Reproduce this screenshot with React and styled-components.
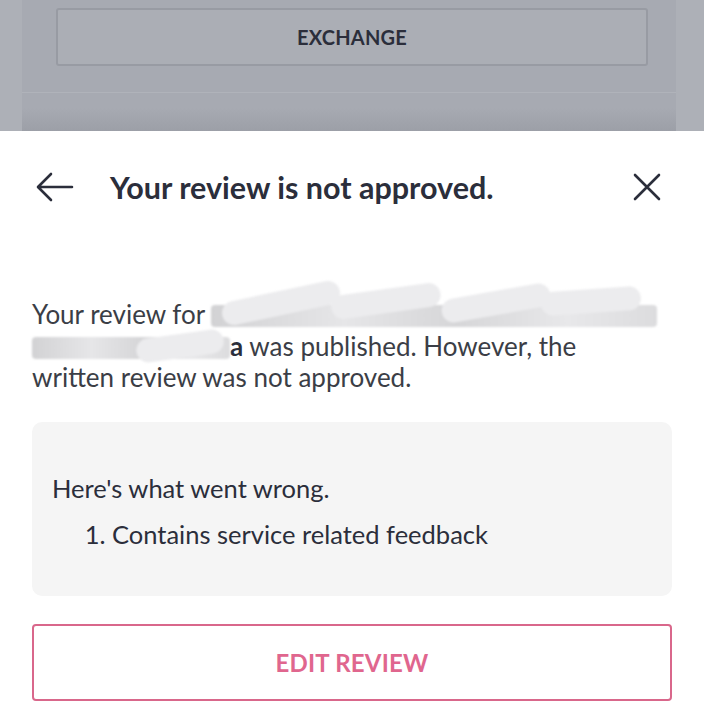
import React from 'react'
import styled, { createGlobalStyle } from 'styled-components'

const Global = createGlobalStyle`
html, body {
    margin: 0;
    padding: 0;
    background: #fff;
}
body {
    font-family: "Lato", "Noto Sans", sans-serif;
    width: 704px;
    height: 724px;
    overflow: hidden;
}
`

const Backdrop = styled.div`
height: 131px;
background: #adb0b7;
display: flex;
padding-left: 22px;
`

const BackPanel = styled.div`
width: 654px;
background: #a7aab2;
display: flex;
flex-direction: column;
`

const BackButtonRow = styled.div`
height: 93px;
border-bottom: 1px solid #b0b3ba;
box-sizing: border-box;
padding: 8px 28px 0 34px;
`

const ExchangeButton = styled.div`
height: 58px;
border: 2px solid #989ba3;
border-radius: 3px;
box-sizing: border-box;
background: #abaeb5;
display: flex;
align-items: center;
justify-content: center;
font-size: 20px;
font-weight: 700;
color: #2b2e3b;
letter-spacing: 0.2px;
`

const Shade = styled.div`
flex: 1;
background: linear-gradient(#a7aab2 40%, #9c9fa7);
`

const Sheet = styled.div`
background: #fff;
padding: 0 32px;
height: 593px;
box-sizing: border-box;
`

const Header = styled.div`
display: flex;
align-items: center;
height: 112px;
`

const IconButton = styled.button`
border: none;
background: none;
padding: 0;
display: flex;
color: #2b2e3b;
margin: ${p => p.$right ? '0 10px 0 auto' : '0 0 0 4px'};
`

const Title = styled.h2`
margin: 0 0 0 36px;
font-size: 30.5px;
font-weight: 700;
color: #2b2e3b;
`

const Message = styled.p`
margin: 56px 0 0;
font-size: 26px;
line-height: 31.5px;
color: #3b3e46;
`

const Redact = styled.span`
display: inline-block;
position: relative;
width: ${p => p.$w}px;
height: 22px;
vertical-align: -3px;
background: linear-gradient(90deg, #d2d2d4, #e6e6e8 30%, #d6d6d8 55%, #e8e8ea 80%, #dcdcde);
filter: blur(1px);
border-radius: 4px;
`

const Blob = styled.span`
position: absolute;
left: ${p => p.$x}px;
top: ${p => p.$y}px;
width: ${p => p.$w}px;
height: 24px;
background: #ececee;
border-radius: 14px;
transform: rotate(${p => p.$r}deg);
`

const Bold = styled.b`
font-weight: 700;
color: #2b2e3b;
`

const Reasons = styled.div`
margin-top: 28px;
background: #f5f5f5;
border-radius: 10px;
height: 174px;
box-sizing: border-box;
padding: 50px 20px 0;
font-size: 25.5px;
color: #2b2e3b;
`

const ReasonTitle = styled.div`
line-height: 32px;
`

const ReasonList = styled.ol`
margin: 14px 0 0;
padding-left: 60px;
line-height: 32px;
`

const EditButton = styled.button`
margin-top: 28px;
width: 100%;
height: 77px;
background: #fff;
border: 2px solid #d9678b;
border-radius: 4px;
font-family: inherit;
font-size: 24px;
font-weight: 700;
color: #e0668e;
letter-spacing: 0.2px;
`

const App = () => {
    return (
        <>
            <Global />
            <Backdrop>
                <BackPanel>
                    <BackButtonRow>
                        <ExchangeButton>EXCHANGE</ExchangeButton>
                    </BackButtonRow>
                    <Shade />
                </BackPanel>
            </Backdrop>
            <Sheet>
                <Header>
                    <IconButton aria-label="back">
                        <svg width="38" height="30" viewBox="0 0 38 30" fill="none" stroke="currentColor" strokeWidth="2.6" strokeLinecap="round" strokeLinejoin="round">
                            <path d="M36 15H3M15 2L2 15l13 13" />
                        </svg>
                    </IconButton>
                    <Title>Your review is not approved.</Title>
                    <IconButton $right aria-label="close">
                        <svg width="30" height="30" viewBox="0 0 30 30" fill="none" stroke="currentColor" strokeWidth="2.6" strokeLinecap="round">
                            <path d="M3 3l24 24M27 3L3 27" />
                        </svg>
                    </IconButton>
                </Header>
                <Message>
                    Your review for{' '}
                    <Redact $w={446}>
                        <Blob $x={10} $y={-14} $w={120} $r={-12} />
                        <Blob $x={120} $y={-16} $w={110} $r={-8} />
                        <Blob $x={230} $y={-14} $w={110} $r={-10} />
                        <Blob $x={330} $y={-16} $w={100} $r={-4} />
                    </Redact>
                    <br />
                    <Redact $w={198}>
                        <Blob $x={104} $y={-3} $w={88} $r={-8} />
                    </Redact>
                    <Bold>a</Bold> was published. However, the
                    <br />
                    written review was not approved.
                </Message>
                <Reasons>
                    <ReasonTitle>Here's what went wrong.</ReasonTitle>
                    <ReasonList>
                        <li>Contains service related feedback</li>
                    </ReasonList>
                </Reasons>
                <EditButton>EDIT REVIEW</EditButton>
            </Sheet>
        </>
    )
}

export default App
